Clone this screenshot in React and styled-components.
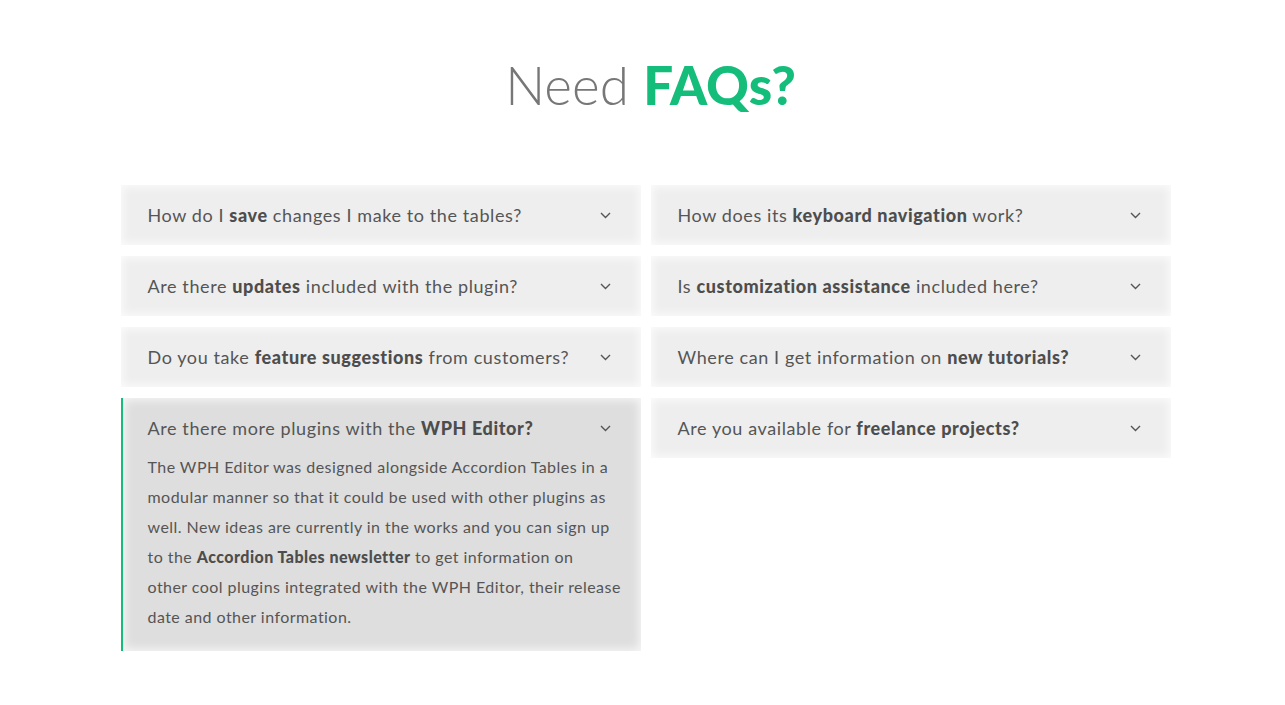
import React from 'react'
import styled, { createGlobalStyle } from 'styled-components'

const GlobalStyle = createGlobalStyle`
  body {
    margin: 0;
    background: #fff;
    font-family: Lato, "Open Sans", sans-serif;
  }
`

const Page = styled.div`
  padding-top: 52px;
  padding-bottom: 55px;
`

const Title = styled.h1`
  margin: 0;
  text-align: center;
  font-size: 53px;
  line-height: 66px;
  font-weight: 300;
  color: #777;
  padding-left: 16px;
`

const Accent = styled.span`
  color: #14bd7a;
  font-weight: 900;
`

const Grid = styled.div`
  display: grid;
  grid-template-columns: 520px 520px;
  column-gap: 10px;
  align-items: start;
  width: 1050px;
  margin: 67px 0 0 calc(50% - 522px);
`

const Column = styled.div`
  display: flex;
  flex-direction: column;
  gap: 11px;
`

const Item = styled.div`
  background: ${p => (p.open ? '#dedede' : '#eeeeee')};
  border-left: ${p => (p.open ? '2px solid #14bd7a' : '0')};
  box-shadow: inset 0 0 10px 2px rgba(255, 255, 255, 0.75);
  color: #555;
`

const Question = styled.div`
  display: flex;
  align-items: center;
  justify-content: space-between;
  height: 60px;
  padding: 0 30px 0 ${p => (p.open ? '25px' : '27px')};
  font-size: 18px;
  letter-spacing: 0.6px;
  b {
    font-weight: 900;
    color: #4d4d4d;
  }
`

const Answer = styled.p`
  margin: -6px 0 0;
  padding: 0 8px 19px 25px;
  font-size: 16px;
  line-height: 30px;
  letter-spacing: 0.45px;
  b {
    font-weight: 900;
    color: #4d4d4d;
  }
`

const Chevron = () => (
  <svg width="11" height="7" viewBox="0 0 11 7">
    <polyline points="1,1 5.5,5.5 10,1" fill="none" stroke="#555" strokeWidth="1.4" />
  </svg>
)

const Faq = ({ open, children, answer }) => (
  <Item open={open}>
    <Question open={open}>
      <span>{children}</span>
      <Chevron />
    </Question>
    {answer ? <Answer>{answer}</Answer> : null}
  </Item>
)

export default function App () {
  return (
    <Page>
      <GlobalStyle />
      <Title>Need <Accent>FAQs?</Accent></Title>
      <Grid>
        <Column>
          <Faq>How do I <b>save</b> changes I make to the tables?</Faq>
          <Faq>Are there <b>updates</b> included with the plugin?</Faq>
          <Faq>Do you take <b>feature suggestions</b> from customers?</Faq>
          <Faq
            open
            answer={
              <>
                The WPH Editor was designed alongside Accordion Tables in a<br />
                modular manner so that it could be used with other plugins as<br />
                well. New ideas are currently in the works and you can sign up<br />
                to the <b>Accordion Tables newsletter</b> to get information on<br />
                other cool plugins integrated with the WPH Editor, their release<br />
                date and other information.
              </>
            }
          >
            Are there more plugins with the <b>WPH Editor?</b>
          </Faq>
        </Column>
        <Column>
          <Faq>How does its <b>keyboard navigation</b> work?</Faq>
          <Faq>Is <b>customization assistance</b> included here?</Faq>
          <Faq>Where can I get information on <b>new tutorials?</b></Faq>
          <Faq>Are you available for <b>freelance projects?</b></Faq>
        </Column>
      </Grid>
    </Page>
  )
}
